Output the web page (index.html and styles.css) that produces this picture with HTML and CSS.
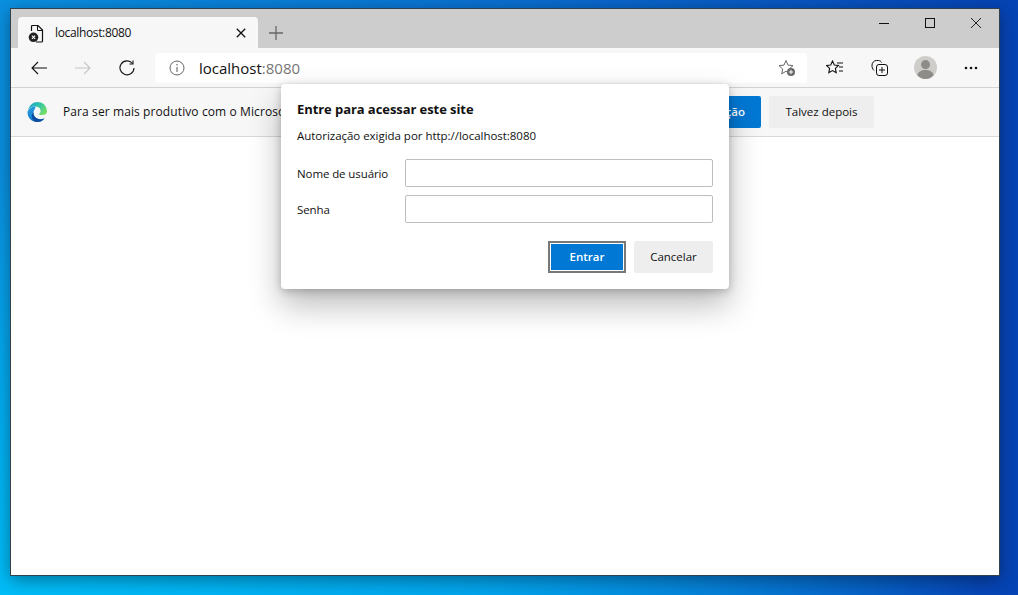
FILE: index.html
```html
<!DOCTYPE html>
<html lang="pt-BR">
<head>
<meta charset="utf-8">
<title>localhost:8080</title>
<link rel="stylesheet" href="styles.css">
</head>
<body>
<div class="window">
  <div class="titlebar">
    <div class="tab">
      <svg class="tab-icon" width="18" height="20" viewBox="0 0 18 20"><path d="M4.500 7V2.500a1 1 0 0 1 1-1h5.500l4.500 4.500v11a1 1 0 0 1-1 1H9" fill="none" stroke="#111" stroke-width="1.200"/><path d="M10.500 1.500V6.500h5" fill="none" stroke="#111" stroke-width="1"/><circle cx="6.500" cy="13.300" r="4.800" fill="#222"/><path d="M4.900 11.700l3.200 3.200M8.100 11.700l-3.200 3.200" stroke="#fff" stroke-width="1.100"/></svg>
      <span class="tab-title">localhost:8080</span>
      <svg class="tab-close" width="10" height="10" viewBox="0 0 10 10"><path d="M.8.800l8.400 8.400M9.200.800L.8 9.200" stroke="#111" stroke-width="1.300"/></svg>
    </div>
    <svg class="new-tab" width="14" height="14" viewBox="0 0 14 14"><path d="M7 0v14M0 7h14" stroke="#666" stroke-width="1.300"/></svg>
    <div class="caption">
      <svg width="10" height="10" viewBox="0 0 10 10"><path d="M0 5.500h10" stroke="#111"/></svg>
      <svg width="10" height="10" viewBox="0 0 10 10"><rect x=".5" y=".5" width="9" height="9" fill="none" stroke="#111"/></svg>
      <svg width="10" height="10" viewBox="0 0 10 10"><path d="M0 0l10 10M10 0L0 10" stroke="#111" stroke-width=".9"/></svg>
    </div>
  </div>
  <div class="toolbar">
    <svg class="nav-back" width="16" height="14" viewBox="0 0 16 14"><path d="M16 7H1M7 1L1 7l6 6" fill="none" stroke="#111" stroke-width="1.100"/></svg>
    <svg class="nav-forward" width="16" height="14" viewBox="0 0 16 14"><path d="M0 7h15M9 1l6 6-6 6" fill="none" stroke="#c6c6c6" stroke-width="1.100"/></svg>
    <svg class="nav-reload" width="16" height="16" viewBox="0 0 16 16"><path d="M13.500 3.500A7 7 0 1 0 15 8" fill="none" stroke="#111" stroke-width="1.100"/><path d="M14 .5v3.500h-3.500" fill="none" stroke="#111" stroke-width="1.100"/></svg>
    <div class="address">
      <svg class="info-icon" width="16" height="16" viewBox="0 0 16 16"><circle cx="8" cy="8" r="7" fill="none" stroke="#666" stroke-width="1"/><path d="M8 7v5" stroke="#666" stroke-width="1.100"/><circle cx="8" cy="4.800" r=".8" fill="#666"/></svg>
      <span class="url">localhost<span class="url-port">:8080</span></span>
      <svg class="fav-add" width="18" height="18" viewBox="0 0 18 18"><path d="M8 1.500l2 4.600 5 .5-3.700 3.300 1 4.800L8 12.300l-4.300 2.500 1-4.800L1 6.600l5-.5z" fill="none" stroke="#666" stroke-width="1"/><circle cx="13" cy="13" r="4" fill="#666"/><path d="M13 10.800v4.400M10.800 13h4.400" stroke="#fff" stroke-width="1"/></svg>
    </div>
    <div class="tools">
      <svg width="19" height="16" viewBox="0 0 19 16"><path d="M6.500 1l1.800 4 4.200.5-3.100 2.900.8 4.300-3.700-2.100-3.700 2.100.8-4.300L.5 5.500 4.700 5z" fill="none" stroke="#111" stroke-width="1.100"/><path d="M11 3h6M13 7h4M13 11h4" stroke="#111"/></svg>
      <svg width="17" height="17" viewBox="0 0 17 17"><path d="M3 11.500C1.500 10 .8 8 1 6c.2-2.500 2-4.500 4.500-4.500h2c1.500 0 2.500.8 3 2" fill="none" stroke="#111"/><rect x="5.500" y="5.500" width="11" height="11" rx="2.500" fill="#f7f7f7" stroke="#111"/><path d="M11 8v6M8 11h6" stroke="#111"/></svg>
      <svg width="23" height="23" viewBox="0 0 24 24"><circle cx="12" cy="12" r="12" fill="#cfcdca"/><circle cx="12" cy="9" r="4.700" fill="#8e8c89"/><path d="M3.500 20c.5-3.500 4-5.500 8.500-5.500s8 2 8.500 5.500A11.800 11.800 0 0 1 12 24a11.800 11.800 0 0 1-8.500-4z" fill="#8e8c89"/></svg>
      <svg width="15" height="4" viewBox="0 0 15 4"><circle cx="3" cy="2" r="1.300" fill="#111"/><circle cx="8" cy="2" r="1.300" fill="#111"/><circle cx="13" cy="2" r="1.300" fill="#111"/></svg>
    </div>
  </div>
  <div class="infobar">
    <svg class="edge-logo" width="20" height="20" viewBox="0 0 20 20">
      <defs>
        <linearGradient id="edgeA" x1="0" y1="0" x2="1" y2=".6"><stop offset="0" stop-color="#1a9ad6"/><stop offset=".55" stop-color="#33c6a4"/><stop offset="1" stop-color="#74dd6a"/></linearGradient>
        <linearGradient id="edgeB" x1="0" y1="0" x2=".6" y2="1"><stop offset="0" stop-color="#2aa3e6"/><stop offset="1" stop-color="#0b6cc4"/></linearGradient>
      </defs>
      <path d="M1 8C2.500 3 6 0 10.500 0 16 0 20 4 20 9.500c0 2.500-2.500 3.500-5 3.500-1.500 0-3-.3-3.500-1 1.500-.5 2.500-2 2-4-.5-2-2.500-3.500-5-3.500C5 4.500 2.500 6 1 8z" fill="url(#edgeA)"/>
      <path d="M8.500 4.500C4 4.500.5 8 .5 10.500.5 16 5 20 10 20c3 0 5.500-1 7.500-3.500-2.500 1-5.500 1-8-.5-2.500-1.500-3.500-4-3-6 .5-2.500 2.500-4.500 2-5.500z" fill="url(#edgeB)"/>
      <path d="M6.500 10C6 13 8 16 11 17c2.500.8 4.500.2 6.500-.5-2 2.500-4.500 3.500-7.500 3.500-2.500 0-4.500-2-5-5-.5-2 .5-4 1.500-5z" fill="#0c4c9e"/>
    </svg>
    <span class="info-text">Para ser mais produtivo com o Microsoft Edge, ative a sincronização</span>
    <div class="info-actions">
      <button class="info-btn info-primary">Ativar a sincronização</button>
      <button class="info-btn info-secondary">Talvez depois</button>
    </div>
  </div>
  <div class="page"></div>
  <form class="dialog">
    <h1 class="dialog-title">Entre para acessar este site</h1>
    <p class="dialog-sub">Autorização exigida por http://localhost:8080</p>
    <div class="fields">
      <label class="field-label" for="user">Nome de usuário</label>
      <input class="field-input" id="user" type="text">
      <label class="field-label" for="pass">Senha</label>
      <input class="field-input" id="pass" type="password">
    </div>
    <div class="dialog-actions">
      <button class="btn btn-primary" type="button">Entrar</button>
      <button class="btn btn-secondary" type="button">Cancelar</button>
    </div>
  </form>
</div>
</body>
</html>
```
FILE: styles.css
```css
* { box-sizing: border-box; }
html, body { margin: 0; height: 100%; overflow: hidden; }
body {
  padding: 8px 18px 19px 10px;
  font-family: "Open Sans", "Noto Sans", sans-serif;
  color: #111;
  background:
    radial-gradient(120% 90% at 0% 100%, #00bdf8 0%, rgba(0,180,245,.75) 40%, rgba(0,120,215,0) 80%),
    linear-gradient(90deg, #0a90e0 0%, #0a6fd0 50%, #0643b4 100%);
}
.window {
  position: relative;
  height: 100%;
  display: flex;
  flex-direction: column;
  border: 1px solid #30424f;
  box-shadow: 0 4px 16px rgba(0,0,0,.38);
  background: #fff;
}
.titlebar {
  height: 39px;
  flex: none;
  display: flex;
  align-items: flex-end;
  padding-left: 7px;
  background: #cdcdcd;
}
.tab {
  width: 240px;
  height: 31px;
  display: flex;
  align-items: center;
  padding: 0 12px 0 9px;
  background: #f7f7f7;
  border-radius: 4px 4px 0 0;
}
.tab-icon { flex: none; margin-top: 2px; }
.tab-title { flex: 1; margin-left: 10px; font-size: 12px; letter-spacing: -.35px; }
.tab-close { flex: none; }
.new-tab { flex: none; margin: 0 0 8px 11px; }
.caption {
  margin-left: auto;
  align-self: flex-start;
  display: flex;
  gap: 36px;
  padding: 9px 18px 0 0;
}
.toolbar {
  height: 40px;
  flex: none;
  display: flex;
  align-items: center;
  padding-left: 20px;
  background: #f7f7f7;
  border-bottom: 1px solid #d2d2d2;
}
.nav-forward { margin-left: 28px; }
.nav-reload { margin-left: 28px; }
.address {
  width: 652px;
  height: 30px;
  margin-left: 20px;
  display: flex;
  align-items: center;
  padding: 0 11px 0 14px;
  background: #fff;
  border-radius: 4px;
}
.url { flex: 1; margin-left: 14px; font-size: 15px; }
.url-port { color: #767676; }
.tools {
  display: flex;
  align-items: center;
  gap: 26px;
  margin-left: 19px;
}
.infobar {
  height: 49px;
  flex: none;
  display: flex;
  align-items: center;
  padding: 0 125px 0 16px;
  background: #f7f7f7;
  border-bottom: 1px solid #d8d8d8;
}
.edge-logo { flex: none; }
.info-text {
  width: 218px;
  margin-left: 16px;
  padding-bottom: 2px;
  overflow: hidden;
  font-size: 12px;
  letter-spacing: .1px;
  white-space: nowrap;
}
.info-actions { margin-left: auto; display: flex; gap: 8px; }
.info-btn {
  height: 32px;
  padding: 0 16px 2px;
  border: 0;
  border-radius: 2px;
  font: 600 11.500px "Open Sans", "Noto Sans", sans-serif;
}
.info-primary { background: #0078d4; color: #fff; }
.info-secondary {
  width: 105px;
  padding: 0 0 2px;
  background: #eeeeee;
  color: #111;
  font-weight: 500;
}
.page { flex: 1; background: #fff; }
.dialog {
  position: absolute;
  left: 270px;
  top: 75px;
  width: 448px;
  height: 205px;
  padding: 16px;
  background: #fff;
  border-radius: 4px;
  box-shadow: 0 16px 32px rgba(0,0,0,.27), 0 2px 8px rgba(0,0,0,.22);
}
.dialog-title { margin: 0; font-size: 13px; line-height: 18px; font-weight: 700; letter-spacing: -.07px; }
.dialog-sub { margin: 10px 0 0; font-size: 11.500px; line-height: 16px; letter-spacing: -.03px; }
.fields {
  display: grid;
  grid-template-columns: 108px 308px;
  grid-auto-rows: 28px;
  row-gap: 8px;
  align-items: center;
  margin-top: 15px;
}
.field-label { font-size: 11.500px; letter-spacing: -.1px; }
.field-input {
  width: 100%;
  height: 28px;
  border: 1px solid #bdbdbd;
  border-radius: 2px;
  background: #fff;
}
.dialog-actions {
  display: flex;
  justify-content: flex-end;
  gap: 8px;
  margin-top: 18px;
}
.btn {
  height: 32px;
  padding: 0 0 2px;
  border: 0;
  border-radius: 2px;
  font: 600 11.500px "Open Sans", "Noto Sans", sans-serif;
}
.btn-primary {
  width: 78px;
  background: #0078d4;
  color: #fff;
  border: 2px solid #787878;
  border-radius: 0;
  box-shadow: inset 0 0 0 1px #fff;
}
.btn-secondary { width: 79px; background: #eeeeee; color: #111; font-weight: 500; }
```
